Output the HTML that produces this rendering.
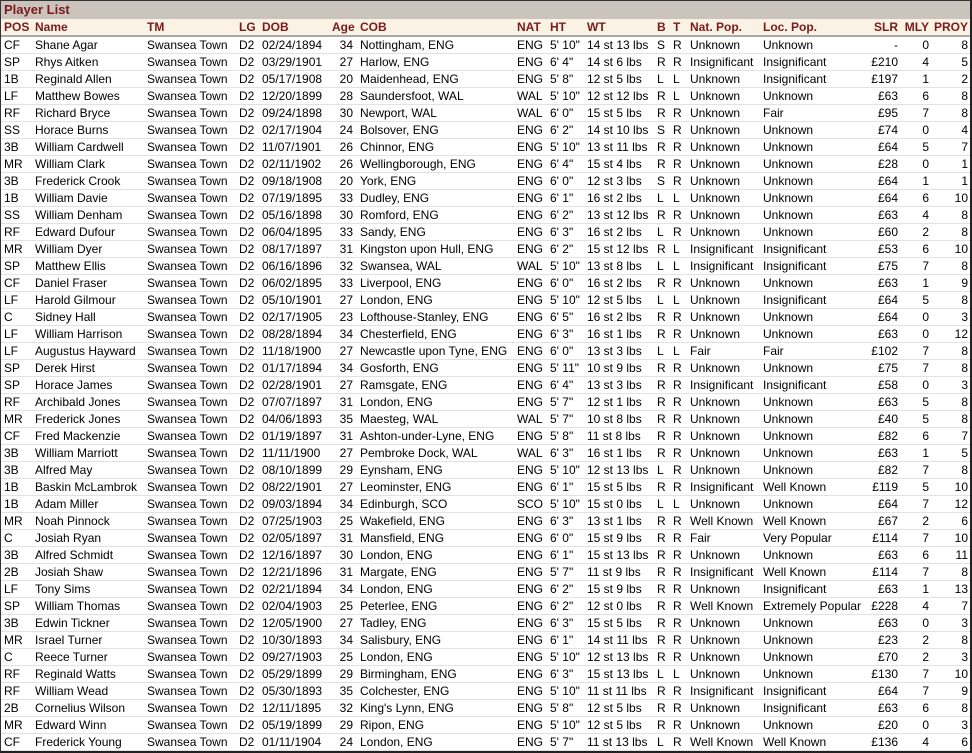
<!DOCTYPE html>
<html><head><meta charset="utf-8"><style>
html,body{margin:0;padding:0;background:#fff;}
body{width:972px;height:753px;overflow:hidden;position:relative;font-family:"Liberation Sans",Arial,sans-serif;font-size:12px;color:#000;}
#frame{position:absolute;left:0;top:0;width:972px;height:753px;border:1px solid #333;border-bottom:2px solid #222;border-right:2px solid #222;box-sizing:border-box;}
#title{position:absolute;left:0;top:0;width:972px;height:19px;background:#cbc4bd;color:#7a1a1a;font-weight:bold;font-size:13px;line-height:20px;padding-left:4px;box-sizing:border-box;}
table{position:absolute;left:0;top:19px;border-collapse:collapse;table-layout:fixed;width:970px;}
td,th{padding:0;height:16px;line-height:16px;white-space:nowrap;overflow:hidden;border-bottom:1px solid #e2e2e2;}
th{background:#faf2e4;color:#7a1a1a;font-weight:bold;text-align:left;border-bottom:2px solid #a9a9a9;height:15px;}
td:first-child,th:first-child{padding-left:4px;}
td:last-child,th:last-child{padding-right:2px;}
.r{text-align:right;}
.c5{padding-right:2px;}
.c6{padding-left:5px;}
</style></head><body>
<div id="title">Player List</div>
<table>
<colgroup><col style="width:35px"><col style="width:112px"><col style="width:92px"><col style="width:23px"><col style="width:70px"><col style="width:23px"><col style="width:162px"><col style="width:33px"><col style="width:37px"><col style="width:70px"><col style="width:16px"><col style="width:17px"><col style="width:73px"><col style="width:105px"><col style="width:30px"><col style="width:31px"><col style="width:41px"></colgroup>
<tr><th>POS</th><th>Name</th><th>TM</th><th>LG</th><th>DOB</th><th class="r c5">Age</th><th class="c6">COB</th><th>NAT</th><th>HT</th><th>WT</th><th>B</th><th>T</th><th>Nat. Pop.</th><th>Loc. Pop.</th><th class="r">SLR</th><th class="r">MLY</th><th class="r">PROY</th></tr>
<tr><td>CF</td><td>Shane Agar</td><td>Swansea Town</td><td>D2</td><td>02/24/1894</td><td class="r c5">34</td><td class="c6">Nottingham, ENG</td><td>ENG</td><td>5' 10"</td><td>14 st 13 lbs</td><td>S</td><td>R</td><td>Unknown</td><td>Unknown</td><td class="r">-</td><td class="r">0</td><td class="r">8</td></tr>
<tr><td>SP</td><td>Rhys Aitken</td><td>Swansea Town</td><td>D2</td><td>03/29/1901</td><td class="r c5">27</td><td class="c6">Harlow, ENG</td><td>ENG</td><td>6' 4"</td><td>14 st 6 lbs</td><td>R</td><td>R</td><td>Insignificant</td><td>Insignificant</td><td class="r">£210</td><td class="r">4</td><td class="r">5</td></tr>
<tr><td>1B</td><td>Reginald Allen</td><td>Swansea Town</td><td>D2</td><td>05/17/1908</td><td class="r c5">20</td><td class="c6">Maidenhead, ENG</td><td>ENG</td><td>5' 8"</td><td>12 st 5 lbs</td><td>L</td><td>L</td><td>Unknown</td><td>Insignificant</td><td class="r">£197</td><td class="r">1</td><td class="r">2</td></tr>
<tr><td>LF</td><td>Matthew Bowes</td><td>Swansea Town</td><td>D2</td><td>12/20/1899</td><td class="r c5">28</td><td class="c6">Saundersfoot, WAL</td><td>WAL</td><td>5' 10"</td><td>12 st 12 lbs</td><td>R</td><td>L</td><td>Unknown</td><td>Unknown</td><td class="r">£63</td><td class="r">6</td><td class="r">8</td></tr>
<tr><td>RF</td><td>Richard Bryce</td><td>Swansea Town</td><td>D2</td><td>09/24/1898</td><td class="r c5">30</td><td class="c6">Newport, WAL</td><td>WAL</td><td>6' 0"</td><td>15 st 5 lbs</td><td>R</td><td>R</td><td>Unknown</td><td>Fair</td><td class="r">£95</td><td class="r">7</td><td class="r">8</td></tr>
<tr><td>SS</td><td>Horace Burns</td><td>Swansea Town</td><td>D2</td><td>02/17/1904</td><td class="r c5">24</td><td class="c6">Bolsover, ENG</td><td>ENG</td><td>6' 2"</td><td>14 st 10 lbs</td><td>S</td><td>R</td><td>Unknown</td><td>Unknown</td><td class="r">£74</td><td class="r">0</td><td class="r">4</td></tr>
<tr><td>3B</td><td>William Cardwell</td><td>Swansea Town</td><td>D2</td><td>11/07/1901</td><td class="r c5">26</td><td class="c6">Chinnor, ENG</td><td>ENG</td><td>5' 10"</td><td>13 st 11 lbs</td><td>R</td><td>R</td><td>Unknown</td><td>Unknown</td><td class="r">£64</td><td class="r">5</td><td class="r">7</td></tr>
<tr><td>MR</td><td>William Clark</td><td>Swansea Town</td><td>D2</td><td>02/11/1902</td><td class="r c5">26</td><td class="c6">Wellingborough, ENG</td><td>ENG</td><td>6' 4"</td><td>15 st 4 lbs</td><td>R</td><td>R</td><td>Unknown</td><td>Unknown</td><td class="r">£28</td><td class="r">0</td><td class="r">1</td></tr>
<tr><td>3B</td><td>Frederick Crook</td><td>Swansea Town</td><td>D2</td><td>09/18/1908</td><td class="r c5">20</td><td class="c6">York, ENG</td><td>ENG</td><td>6' 0"</td><td>12 st 3 lbs</td><td>S</td><td>R</td><td>Unknown</td><td>Unknown</td><td class="r">£64</td><td class="r">1</td><td class="r">1</td></tr>
<tr><td>1B</td><td>William Davie</td><td>Swansea Town</td><td>D2</td><td>07/19/1895</td><td class="r c5">33</td><td class="c6">Dudley, ENG</td><td>ENG</td><td>6' 1"</td><td>16 st 2 lbs</td><td>L</td><td>L</td><td>Unknown</td><td>Unknown</td><td class="r">£64</td><td class="r">6</td><td class="r">10</td></tr>
<tr><td>SS</td><td>William Denham</td><td>Swansea Town</td><td>D2</td><td>05/16/1898</td><td class="r c5">30</td><td class="c6">Romford, ENG</td><td>ENG</td><td>6' 2"</td><td>13 st 12 lbs</td><td>R</td><td>R</td><td>Unknown</td><td>Unknown</td><td class="r">£63</td><td class="r">4</td><td class="r">8</td></tr>
<tr><td>RF</td><td>Edward Dufour</td><td>Swansea Town</td><td>D2</td><td>06/04/1895</td><td class="r c5">33</td><td class="c6">Sandy, ENG</td><td>ENG</td><td>6' 3"</td><td>16 st 2 lbs</td><td>L</td><td>R</td><td>Unknown</td><td>Unknown</td><td class="r">£60</td><td class="r">2</td><td class="r">8</td></tr>
<tr><td>MR</td><td>William Dyer</td><td>Swansea Town</td><td>D2</td><td>08/17/1897</td><td class="r c5">31</td><td class="c6">Kingston upon Hull, ENG</td><td>ENG</td><td>6' 2"</td><td>15 st 12 lbs</td><td>R</td><td>L</td><td>Insignificant</td><td>Insignificant</td><td class="r">£53</td><td class="r">6</td><td class="r">10</td></tr>
<tr><td>SP</td><td>Matthew Ellis</td><td>Swansea Town</td><td>D2</td><td>06/16/1896</td><td class="r c5">32</td><td class="c6">Swansea, WAL</td><td>WAL</td><td>5' 10"</td><td>13 st 8 lbs</td><td>L</td><td>L</td><td>Insignificant</td><td>Insignificant</td><td class="r">£75</td><td class="r">7</td><td class="r">8</td></tr>
<tr><td>CF</td><td>Daniel Fraser</td><td>Swansea Town</td><td>D2</td><td>06/02/1895</td><td class="r c5">33</td><td class="c6">Liverpool, ENG</td><td>ENG</td><td>6' 0"</td><td>16 st 2 lbs</td><td>R</td><td>R</td><td>Unknown</td><td>Unknown</td><td class="r">£63</td><td class="r">1</td><td class="r">9</td></tr>
<tr><td>LF</td><td>Harold Gilmour</td><td>Swansea Town</td><td>D2</td><td>05/10/1901</td><td class="r c5">27</td><td class="c6">London, ENG</td><td>ENG</td><td>5' 10"</td><td>12 st 5 lbs</td><td>L</td><td>L</td><td>Unknown</td><td>Insignificant</td><td class="r">£64</td><td class="r">5</td><td class="r">8</td></tr>
<tr><td>C</td><td>Sidney Hall</td><td>Swansea Town</td><td>D2</td><td>02/17/1905</td><td class="r c5">23</td><td class="c6">Lofthouse-Stanley, ENG</td><td>ENG</td><td>6' 5"</td><td>16 st 2 lbs</td><td>R</td><td>R</td><td>Unknown</td><td>Unknown</td><td class="r">£64</td><td class="r">0</td><td class="r">3</td></tr>
<tr><td>LF</td><td>William Harrison</td><td>Swansea Town</td><td>D2</td><td>08/28/1894</td><td class="r c5">34</td><td class="c6">Chesterfield, ENG</td><td>ENG</td><td>6' 3"</td><td>16 st 1 lbs</td><td>R</td><td>R</td><td>Unknown</td><td>Unknown</td><td class="r">£63</td><td class="r">0</td><td class="r">12</td></tr>
<tr><td>LF</td><td>Augustus Hayward</td><td>Swansea Town</td><td>D2</td><td>11/18/1900</td><td class="r c5">27</td><td class="c6">Newcastle upon Tyne, ENG</td><td>ENG</td><td>6' 0"</td><td>13 st 3 lbs</td><td>L</td><td>L</td><td>Fair</td><td>Fair</td><td class="r">£102</td><td class="r">7</td><td class="r">8</td></tr>
<tr><td>SP</td><td>Derek Hirst</td><td>Swansea Town</td><td>D2</td><td>01/17/1894</td><td class="r c5">34</td><td class="c6">Gosforth, ENG</td><td>ENG</td><td>5' 11"</td><td>10 st 9 lbs</td><td>R</td><td>R</td><td>Unknown</td><td>Unknown</td><td class="r">£75</td><td class="r">7</td><td class="r">8</td></tr>
<tr><td>SP</td><td>Horace James</td><td>Swansea Town</td><td>D2</td><td>02/28/1901</td><td class="r c5">27</td><td class="c6">Ramsgate, ENG</td><td>ENG</td><td>6' 4"</td><td>13 st 3 lbs</td><td>R</td><td>R</td><td>Insignificant</td><td>Insignificant</td><td class="r">£58</td><td class="r">0</td><td class="r">3</td></tr>
<tr><td>RF</td><td>Archibald Jones</td><td>Swansea Town</td><td>D2</td><td>07/07/1897</td><td class="r c5">31</td><td class="c6">London, ENG</td><td>ENG</td><td>5' 7"</td><td>12 st 1 lbs</td><td>R</td><td>R</td><td>Unknown</td><td>Unknown</td><td class="r">£63</td><td class="r">5</td><td class="r">8</td></tr>
<tr><td>MR</td><td>Frederick Jones</td><td>Swansea Town</td><td>D2</td><td>04/06/1893</td><td class="r c5">35</td><td class="c6">Maesteg, WAL</td><td>WAL</td><td>5' 7"</td><td>10 st 8 lbs</td><td>R</td><td>R</td><td>Unknown</td><td>Unknown</td><td class="r">£40</td><td class="r">5</td><td class="r">8</td></tr>
<tr><td>CF</td><td>Fred Mackenzie</td><td>Swansea Town</td><td>D2</td><td>01/19/1897</td><td class="r c5">31</td><td class="c6">Ashton-under-Lyne, ENG</td><td>ENG</td><td>5' 8"</td><td>11 st 8 lbs</td><td>R</td><td>R</td><td>Unknown</td><td>Unknown</td><td class="r">£82</td><td class="r">6</td><td class="r">7</td></tr>
<tr><td>3B</td><td>William Marriott</td><td>Swansea Town</td><td>D2</td><td>11/11/1900</td><td class="r c5">27</td><td class="c6">Pembroke Dock, WAL</td><td>WAL</td><td>6' 3"</td><td>16 st 1 lbs</td><td>R</td><td>R</td><td>Unknown</td><td>Unknown</td><td class="r">£63</td><td class="r">1</td><td class="r">5</td></tr>
<tr><td>3B</td><td>Alfred May</td><td>Swansea Town</td><td>D2</td><td>08/10/1899</td><td class="r c5">29</td><td class="c6">Eynsham, ENG</td><td>ENG</td><td>5' 10"</td><td>12 st 13 lbs</td><td>L</td><td>R</td><td>Unknown</td><td>Unknown</td><td class="r">£82</td><td class="r">7</td><td class="r">8</td></tr>
<tr><td>1B</td><td>Baskin McLambrok</td><td>Swansea Town</td><td>D2</td><td>08/22/1901</td><td class="r c5">27</td><td class="c6">Leominster, ENG</td><td>ENG</td><td>6' 1"</td><td>15 st 5 lbs</td><td>R</td><td>R</td><td>Insignificant</td><td>Well Known</td><td class="r">£119</td><td class="r">5</td><td class="r">10</td></tr>
<tr><td>1B</td><td>Adam Miller</td><td>Swansea Town</td><td>D2</td><td>09/03/1894</td><td class="r c5">34</td><td class="c6">Edinburgh, SCO</td><td>SCO</td><td>5' 10"</td><td>15 st 0 lbs</td><td>L</td><td>L</td><td>Unknown</td><td>Unknown</td><td class="r">£64</td><td class="r">7</td><td class="r">12</td></tr>
<tr><td>MR</td><td>Noah Pinnock</td><td>Swansea Town</td><td>D2</td><td>07/25/1903</td><td class="r c5">25</td><td class="c6">Wakefield, ENG</td><td>ENG</td><td>6' 3"</td><td>13 st 1 lbs</td><td>R</td><td>R</td><td>Well Known</td><td>Well Known</td><td class="r">£67</td><td class="r">2</td><td class="r">6</td></tr>
<tr><td>C</td><td>Josiah Ryan</td><td>Swansea Town</td><td>D2</td><td>02/05/1897</td><td class="r c5">31</td><td class="c6">Mansfield, ENG</td><td>ENG</td><td>6' 0"</td><td>15 st 9 lbs</td><td>R</td><td>R</td><td>Fair</td><td>Very Popular</td><td class="r">£114</td><td class="r">7</td><td class="r">10</td></tr>
<tr><td>3B</td><td>Alfred Schmidt</td><td>Swansea Town</td><td>D2</td><td>12/16/1897</td><td class="r c5">30</td><td class="c6">London, ENG</td><td>ENG</td><td>6' 1"</td><td>15 st 13 lbs</td><td>R</td><td>R</td><td>Unknown</td><td>Unknown</td><td class="r">£63</td><td class="r">6</td><td class="r">11</td></tr>
<tr><td>2B</td><td>Josiah Shaw</td><td>Swansea Town</td><td>D2</td><td>12/21/1896</td><td class="r c5">31</td><td class="c6">Margate, ENG</td><td>ENG</td><td>5' 7"</td><td>11 st 9 lbs</td><td>R</td><td>R</td><td>Insignificant</td><td>Well Known</td><td class="r">£114</td><td class="r">7</td><td class="r">8</td></tr>
<tr><td>LF</td><td>Tony Sims</td><td>Swansea Town</td><td>D2</td><td>02/21/1894</td><td class="r c5">34</td><td class="c6">London, ENG</td><td>ENG</td><td>6' 2"</td><td>15 st 9 lbs</td><td>R</td><td>R</td><td>Unknown</td><td>Insignificant</td><td class="r">£63</td><td class="r">1</td><td class="r">13</td></tr>
<tr><td>SP</td><td>William Thomas</td><td>Swansea Town</td><td>D2</td><td>02/04/1903</td><td class="r c5">25</td><td class="c6">Peterlee, ENG</td><td>ENG</td><td>6' 2"</td><td>12 st 0 lbs</td><td>R</td><td>R</td><td>Well Known</td><td>Extremely Popular</td><td class="r">£228</td><td class="r">4</td><td class="r">7</td></tr>
<tr><td>3B</td><td>Edwin Tickner</td><td>Swansea Town</td><td>D2</td><td>12/05/1900</td><td class="r c5">27</td><td class="c6">Tadley, ENG</td><td>ENG</td><td>6' 3"</td><td>15 st 5 lbs</td><td>R</td><td>R</td><td>Unknown</td><td>Unknown</td><td class="r">£63</td><td class="r">0</td><td class="r">3</td></tr>
<tr><td>MR</td><td>Israel Turner</td><td>Swansea Town</td><td>D2</td><td>10/30/1893</td><td class="r c5">34</td><td class="c6">Salisbury, ENG</td><td>ENG</td><td>6' 1"</td><td>14 st 11 lbs</td><td>R</td><td>R</td><td>Unknown</td><td>Unknown</td><td class="r">£23</td><td class="r">2</td><td class="r">8</td></tr>
<tr><td>C</td><td>Reece Turner</td><td>Swansea Town</td><td>D2</td><td>09/27/1903</td><td class="r c5">25</td><td class="c6">London, ENG</td><td>ENG</td><td>5' 10"</td><td>12 st 13 lbs</td><td>R</td><td>R</td><td>Unknown</td><td>Unknown</td><td class="r">£70</td><td class="r">2</td><td class="r">3</td></tr>
<tr><td>RF</td><td>Reginald Watts</td><td>Swansea Town</td><td>D2</td><td>05/29/1899</td><td class="r c5">29</td><td class="c6">Birmingham, ENG</td><td>ENG</td><td>6' 3"</td><td>15 st 13 lbs</td><td>L</td><td>L</td><td>Unknown</td><td>Unknown</td><td class="r">£130</td><td class="r">7</td><td class="r">10</td></tr>
<tr><td>RF</td><td>William Wead</td><td>Swansea Town</td><td>D2</td><td>05/30/1893</td><td class="r c5">35</td><td class="c6">Colchester, ENG</td><td>ENG</td><td>5' 10"</td><td>11 st 11 lbs</td><td>R</td><td>R</td><td>Insignificant</td><td>Insignificant</td><td class="r">£64</td><td class="r">7</td><td class="r">9</td></tr>
<tr><td>2B</td><td>Cornelius Wilson</td><td>Swansea Town</td><td>D2</td><td>12/11/1895</td><td class="r c5">32</td><td class="c6">King's Lynn, ENG</td><td>ENG</td><td>5' 8"</td><td>12 st 5 lbs</td><td>R</td><td>R</td><td>Unknown</td><td>Insignificant</td><td class="r">£63</td><td class="r">6</td><td class="r">8</td></tr>
<tr><td>MR</td><td>Edward Winn</td><td>Swansea Town</td><td>D2</td><td>05/19/1899</td><td class="r c5">29</td><td class="c6">Ripon, ENG</td><td>ENG</td><td>5' 10"</td><td>12 st 5 lbs</td><td>R</td><td>R</td><td>Unknown</td><td>Unknown</td><td class="r">£20</td><td class="r">0</td><td class="r">3</td></tr>
<tr><td>CF</td><td>Frederick Young</td><td>Swansea Town</td><td>D2</td><td>01/11/1904</td><td class="r c5">24</td><td class="c6">London, ENG</td><td>ENG</td><td>5' 7"</td><td>11 st 13 lbs</td><td>L</td><td>R</td><td>Well Known</td><td>Well Known</td><td class="r">£136</td><td class="r">4</td><td class="r">6</td></tr>
</table>
<div id="frame"></div>
</body></html>
